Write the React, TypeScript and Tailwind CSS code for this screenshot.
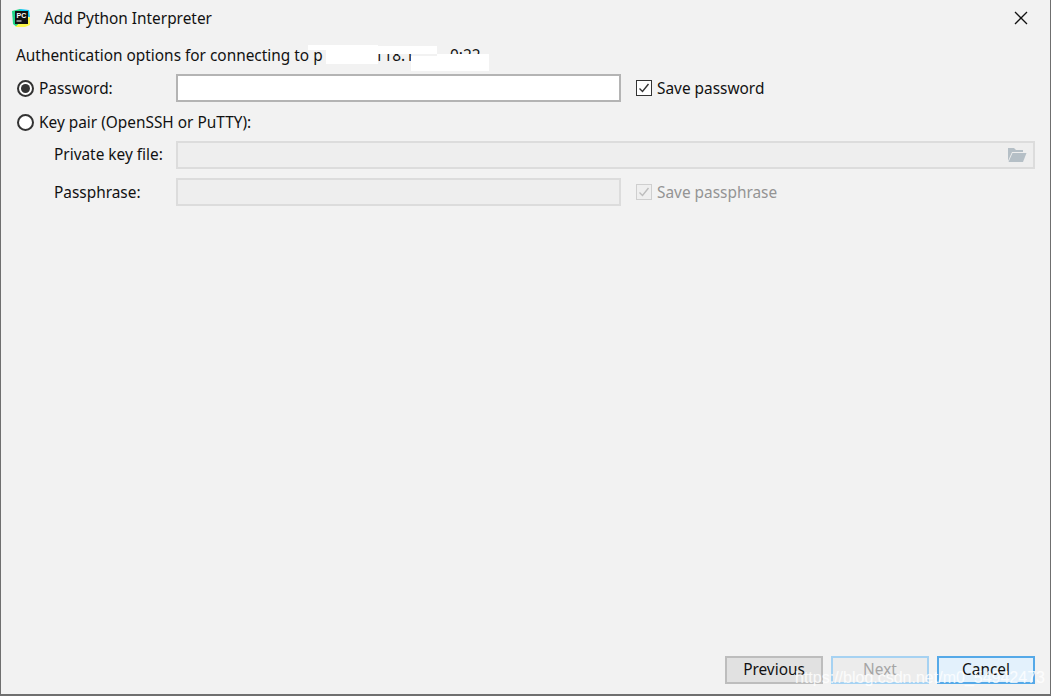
const PycharmLogo = () => (
  <svg width="20" height="20" viewBox="0 0 20 20" className="shrink-0">
    <path d="M1 3 L9 1 L13 4 L6 19 L2 16 Z" fill="#21d789" />
    <path d="M9 1 L18 2 L19 9 L12 8 Z" fill="#07c3f2" />
    <path d="M4 19 L12 12 L19 9 L19 17 L14 19 Z" fill="#fcf84a" />
    <rect x="4" y="3" width="13" height="13" fill="#111" />
    <text x="5.5" y="10" fontSize="7" fontWeight="700" fill="#fff" fontFamily="'Liberation Sans', sans-serif">PC</text>
    <rect x="5.5" y="12.5" width="5" height="1" fill="#fff" />
  </svg>
)

const Radio = ({ checked }: { checked?: boolean }) => (
  <span className="flex h-[17px] w-[17px] shrink-0 items-center justify-center rounded-full border-2 border-[#333] bg-white">
    {checked && <span className="h-[9px] w-[9px] rounded-full bg-[#333]" />}
  </span>
)

const Check = ({ disabled }: { disabled?: boolean }) => (
  <span className={`flex h-4 w-4 shrink-0 items-center justify-center border-[1.5px] ${disabled ? 'border-[#cfcfcf] bg-[#efefef]' : 'border-[#333] bg-white'}`}>
    <svg width="12" height="12" viewBox="0 0 12 12" fill="none" stroke={disabled ? '#bdbdbd' : '#333'} strokeWidth="1.4">
      <path d="M1.5 6.5 L4.5 9.5 L10.5 2" />
    </svg>
  </span>
)

const FolderIcon = () => (
  <svg width="20" height="16" viewBox="0 0 20 16">
    <path d="M1 1 H7 L9 3 H16 V5 H5 L1 14 Z" fill="#b5bfc6" />
    <path d="M5.5 6 H19.5 L16 15 H1.5 Z" fill="#b5bfc6" />
  </svg>
)

const Button = ({ label, className }: { label: string; className: string }) => (
  <button className={`flex h-7 w-[98px] items-center justify-center border-2 pb-[1px] ${className}`}>{label}</button>
)

const App = () => {
  return (
    <div
      className="relative flex h-[696px] w-[1051px] flex-col overflow-hidden border-b-2 border-l border-r border-[#6f6f6f] bg-[#f2f2f2] text-[15.4px] text-[#111]"
      style={{ fontFamily: "'Noto Sans', sans-serif" }}
    >
      <div className="flex h-9 items-center pl-[10px] pr-[22px]">
        <PycharmLogo />
        <span className="ml-[13px] pt-[2px]">Add Python Interpreter</span>
        <svg width="14" height="14" viewBox="0 0 14 14" className="ml-auto" stroke="#111" strokeWidth="1.3">
          <path d="M1 1 L13 13 M13 1 L1 13" />
        </svg>
      </div>

      <div className="mt-[8px] flex h-[22px] items-center pl-[15px] pt-[2px]">
        <span>Authentication options for connecting to p</span>
        <span className="ml-[52px]">118.1</span>
        <span className="ml-[36px]">0:22</span>
      </div>

      <div className="mt-[8px] flex h-7 items-center pl-4">
        <Radio checked />
        <span className="ml-[5px] w-[137px] pt-[2px]">Password:</span>
        <div className="h-7 w-[445px] border-2 border-[#b4b4b4] bg-white" />
        <span className="ml-[15px]"><Check /></span>
        <span className="ml-[5px] pt-[2px]">Save password</span>
      </div>

      <div className="mt-[6px] flex h-7 items-center pl-4">
        <Radio />
        <span className="ml-[5px] pt-[2px]">Key pair (OpenSSH or PuTTY):</span>
      </div>

      <div className="mt-[5px] flex h-[28px] items-center pl-[53px] pr-[15px]">
        <span className="w-[122px]">Private key file:</span>
        <div className="flex h-[28px] flex-1 items-center justify-end border-2 border-[#dcdcdc] bg-[#eeeeee] pr-[6px]">
          <FolderIcon />
        </div>
      </div>

      <div className="mt-[9px] flex h-[28px] items-center pl-[53px]">
        <span className="w-[122px] pt-[2px]">Passphrase:</span>
        <div className="h-[28px] w-[445px] border-2 border-[#dcdcdc] bg-[#eeeeee]" />
        <span className="ml-[15px]"><Check disabled /></span>
        <span className="ml-[5px] pt-[2px] text-[#949494]">Save passphrase</span>
      </div>

      <div className="mt-auto mb-[10px] flex justify-end gap-2 pr-[15px]">
        <Button label="Previous" className="border-[#bdbdbd] bg-[#e1e1e1] text-[#111]" />
        <Button label="Next" className="border-[#a6d2f2] bg-[#ececec] text-[#a5a5a5]" />
        <Button label="Cancel" className="border-[#55a9e8] bg-[#e3f1fc] text-[#111]" />
      </div>

      {/* white scribble hiding the host name */}
      <div className="absolute left-[307px] top-[45px] h-[5px] w-[70px] bg-white" />
      <div className="absolute left-[325px] top-[48px] h-[16px] w-[52px] bg-white" />
      <div className="absolute left-[376px] top-[46px] h-[8px] w-[60px] bg-white" />
      <div className="absolute left-[410px] top-[56px] h-[15px] w-[78px] bg-white" />
      <div className="absolute left-[436px] top-[54px] h-[4px] w-[52px] bg-white" />

      <span
        className="absolute left-[794px] top-[666px] whitespace-nowrap text-[16px] text-white/80"
        style={{ fontFamily: "'Liberation Sans', sans-serif" }}
      >
        https://blog.csdn.net/m0_54942473
      </span>
    </div>
  )
}

export default App
